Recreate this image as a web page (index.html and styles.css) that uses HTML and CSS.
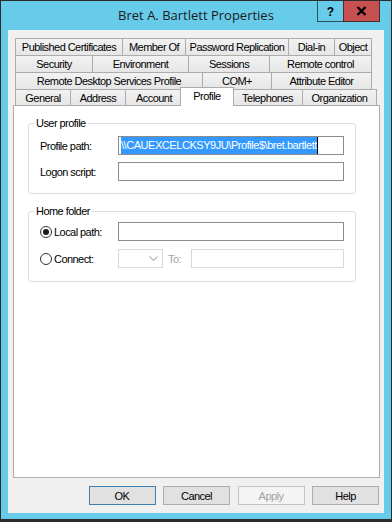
FILE: index.html
```html
<!DOCTYPE html>
<html>
<head>
<meta charset="utf-8">
<link rel="stylesheet" href="styles.css">
</head>
<body>
<div class="window">
  <div class="titlebar">
    <div></div>
    <div class="title">Bret A. Bartlett Properties</div>
    <div class="caps">
      <div class="cap help">?</div>
      <div class="cap close">
        <svg width="11" height="10" viewBox="0 0 11 10"><path d="M1.5 1 L9.5 9 M9.5 1 L1.5 9" stroke="#000" stroke-width="2.4" fill="none"/></svg>
      </div>
    </div>
  </div>
  <div class="client">
    <div class="tabs">
      <div class="tabrow r1">
        <div class="tab">Published Certificates</div>
        <div class="tab">Member Of</div>
        <div class="tab">Password Replication</div>
        <div class="tab">Dial-in</div>
        <div class="tab">Object</div>
      </div>
      <div class="tabrow r2">
        <div class="tab">Security</div>
        <div class="tab">Environment</div>
        <div class="tab">Sessions</div>
        <div class="tab">Remote control</div>
      </div>
      <div class="tabrow r3">
        <div class="tab">Remote Desktop Services Profile</div>
        <div class="tab">COM+</div>
        <div class="tab">Attribute Editor</div>
      </div>
      <div class="tabrow r4">
        <div class="tab">General</div>
        <div class="tab">Address</div>
        <div class="tab">Account</div>
        <div class="tab sel">Profile</div>
        <div class="tab">Telephones</div>
        <div class="tab">Organization</div>
      </div>
    </div>
    <div class="panel">
      <fieldset class="group g1">
        <legend>User profile</legend>
        <div class="rows">
          <div class="frow">
            <div class="lbl">Profile path:</div>
            <div class="tb"><span class="seltext">\\CAUEXCELCKSY9JU\Profile$\bret.bartlett</span><span class="caret"></span></div>
          </div>
          <div class="frow">
            <div class="lbl">Logon script:</div>
            <div class="tb"></div>
          </div>
        </div>
      </fieldset>
      <fieldset class="group g2">
        <legend>Home folder</legend>
        <div class="rows rows2">
          <div class="frow">
            <div class="lbl rl"><span class="radio on"></span>Local path:</div>
            <div class="tb"></div>
          </div>
          <div class="frow">
            <div class="lbl rl"><span class="radio"></span>Connect:</div>
            <div class="dd">
              <svg width="9" height="6" viewBox="0 0 9 6"><path d="M0.5 0.5 L4.5 4.5 L8.5 0.5" stroke="#b8b8b8" stroke-width="1.2" fill="none"/></svg>
            </div>
            <div class="to">To:</div>
            <div class="tb dis short"></div>
          </div>
        </div>
      </fieldset>
    </div>
    <div class="btns">
      <div class="btn def">OK</div>
      <div class="btn">Cancel</div>
      <div class="btn dis">Apply</div>
      <div class="btn">Help</div>
    </div>
  </div>
</div>
</body>
</html>
```

FILE: styles.css
```css
* { box-sizing: border-box; }
html, body { margin: 0; padding: 0; }
body {
  background: #2b2b2b;
  font-family: "Liberation Sans", Arial, sans-serif;
  font-size: 11px;
  letter-spacing: -0.55px;
  color: #000;
}
.window {
  width: 392px;
  height: 522px;
  border: 1px solid #2b2b2b;
  border-bottom-width: 3px;
  background: #67cbea;
  display: flex;
  flex-direction: column;
}
.titlebar {
  height: 29px;
  flex: none;
  display: grid;
  grid-template-columns: 1fr auto 1fr;
  align-items: start;
}
.title {
  font-family: "Open Sans", "Noto Sans", sans-serif;
  font-size: 13px;
  letter-spacing: 0;
  color: #1c1c1c;
  line-height: 29px;
  white-space: nowrap;
}
.caps {
  justify-self: end;
  display: flex;
  margin-right: 11px;
}
.cap {
  height: 21px;
  border: 1px solid #2f4f5c;
  border-top: 0;
  display: flex;
  align-items: center;
  justify-content: center;
}
.help {
  width: 26px;
  border-right: 0;
  font-weight: bold;
  font-size: 12px;
  letter-spacing: 0;
  padding-top: 1px;
}
.close {
  width: 37px;
  background: #c75050;
  border-color: #4e2a2a;
}
.client {
  margin: 0 7px 6px;
  height: 483px;
  flex: none;
  background: #f0f0f0;
  padding-top: 8px;
  display: flex;
  flex-direction: column;
}
.tabs { margin-left: 7px; flex: none; }
.tabrow { display: grid; height: 17px; }
.r1 { grid-template-columns: 107px 63px 103px 46px 38px; }
.r2 { grid-template-columns: 77px 96px 81px 103px; }
.r3 { grid-template-columns: 187px 69px 101px; }
.r4 { height: 16px; grid-template-columns: 55px 55px 57px 50px 70px 75px; }
.tab {
  border: 1px solid #acacac;
  border-right: 0;
  border-bottom: 0;
  background: linear-gradient(#f2f2f2, #e6e6e6);
  display: flex;
  align-items: center;
  justify-content: center;
  white-space: nowrap;
  line-height: 13px;
  padding-top: 1px;
}
.tab:last-child { border-right: 1px solid #acacac; }
.tab.sel {
  background: #fff;
  margin: -2px -2px -1px -2px;
  border-right: 1px solid #acacac;
  position: relative;
  z-index: 2;
  padding-top: 0;
  padding-bottom: 2px;
}
.panel {
  margin-left: 5px;
  width: 367px;
  height: 373px;
  flex: none;
  border: 1px solid #acacac;
  background: #fff;
}
.group {
  margin: 11px 0 0 14px;
  width: 328px;
  border: 1px solid #d5dfe5;
  border-radius: 3px;
  padding: 7px 11px 12px;
  min-inline-size: 0;
}
.group legend {
  padding: 0 2px;
  margin-left: -6px;
  line-height: 12px;
}
.g2 { padding-top: 5px; padding-bottom: 13px; }
.rows { display: flex; flex-direction: column; gap: 7px; }
.rows2 { gap: 8px; }
.frow { display: flex; align-items: center; height: 19px; }
.lbl { width: 78px; flex: none; white-space: nowrap; }
.rl { display: flex; align-items: center; }
.tb {
  width: 226px;
  height: 19px;
  flex: none;
  border: 1px solid #8c8c8c;
  background: #fff;
  padding: 0 2px;
  display: flex;
  align-items: stretch;
  white-space: nowrap;
}
.seltext {
  background: #3399ff;
  color: #fff;
  line-height: 17px;
  letter-spacing: -0.45px;
}
.caret { width: 1px; background: #000; }
.tb.dis { border-color: #d9d9d9; }
.tb.short { width: 153px; }
.radio {
  width: 12px;
  height: 12px;
  border: 1px solid #333;
  border-radius: 50%;
  background: #fff;
  margin-right: 2px;
  display: flex;
  align-items: center;
  justify-content: center;
  flex: none;
}
.radio.on::after {
  content: "";
  width: 6px;
  height: 6px;
  border-radius: 50%;
  background: #1a1a1a;
}
.dd {
  width: 45px;
  height: 19px;
  flex: none;
  border: 1px solid #d9d9d9;
  background: #fff;
  display: flex;
  align-items: center;
  justify-content: flex-end;
  padding-right: 4px;
}
.to {
  width: 23px;
  margin-left: 5px;
  color: #a6a6a6;
  flex: none;
}
.btns {
  display: flex;
  justify-content: flex-end;
  gap: 7.5px;
  margin-top: 8px;
  padding-right: 5px;
}
.btn {
  width: 67px;
  height: 19px;
  border: 1px solid #adadad;
  background: #e1e1e1;
  display: flex;
  align-items: center;
  justify-content: center;
}
.btn.def { border-color: #3c7fb1; }
.btn.dis { background: #f4f4f4; border-color: #c4c4c4; color: #a3a3a3; }
```
